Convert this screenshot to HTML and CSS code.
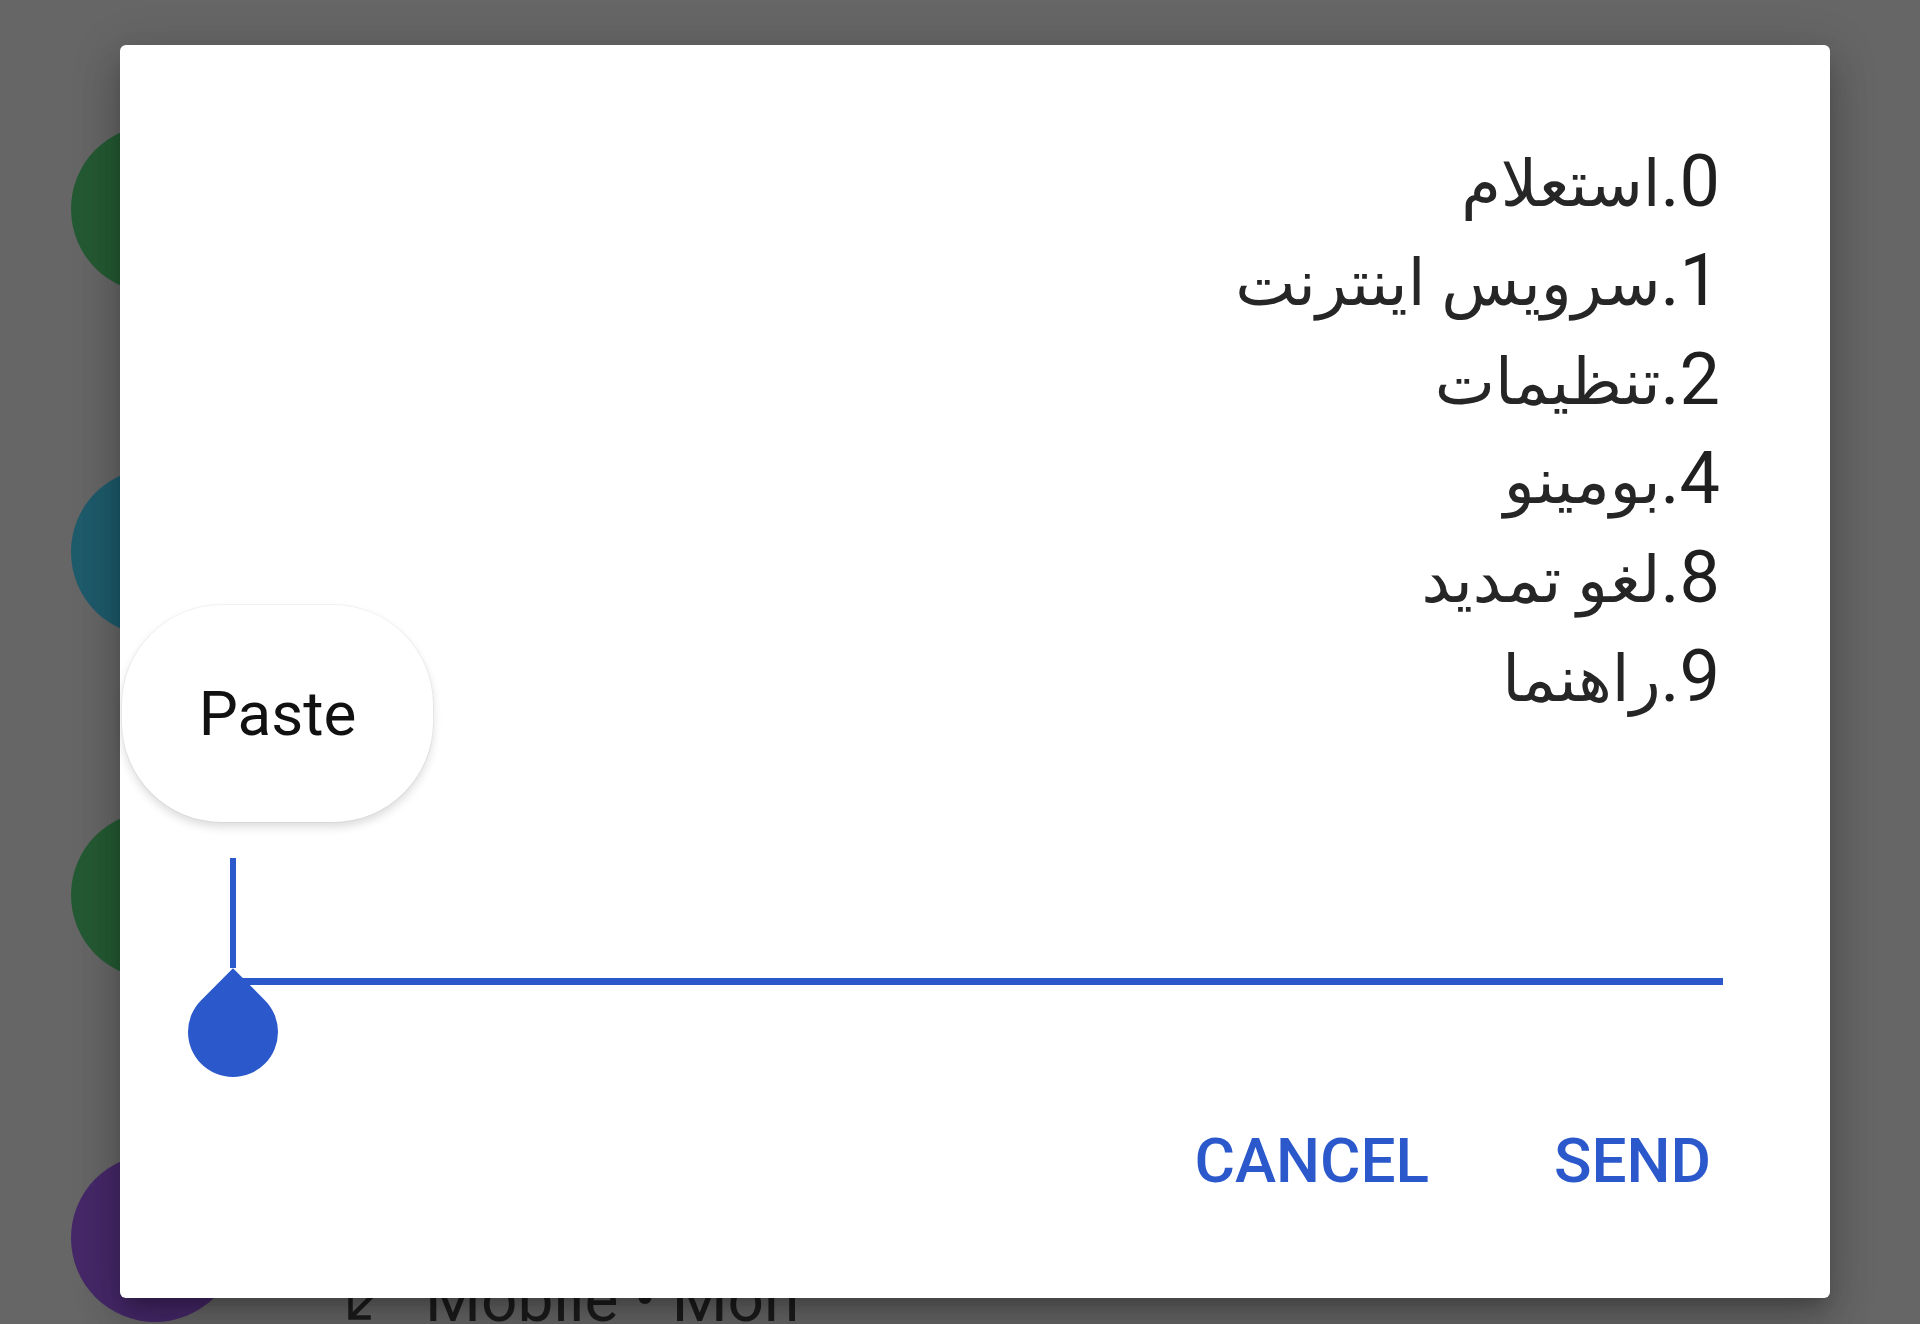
FILE: index.html
```html
<!DOCTYPE html>
<html lang="fa">
<head>
<meta charset="utf-8">
<title>USSD</title>
<link rel="stylesheet" href="styles.css">
</head>
<body>
<div class="screen">
  <ul class="calls">
    <li class="call"><span class="avatar avatar-green"></span><div class="call-text"></div></li>
    <li class="call"><span class="avatar avatar-teal"></span><div class="call-text"></div></li>
    <li class="call"><span class="avatar avatar-green"></span><div class="call-text"></div></li>
    <li class="call"><span class="avatar avatar-purple"></span>
      <div class="call-text">
        <div class="call-meta" dir="ltr">
          <svg class="call-icon" viewBox="0 0 24 24" aria-hidden="true"><path d="M20 5.41 18.59 4 7 15.59V9H5v10h10v-2H8.41z"/></svg>
          <span>Mobile • Mon</span>
        </div>
      </div>
    </li>
  </ul>

  <div class="dialog">
    <ul class="menu" dir="rtl">
      <li>0.<span class="fa">استعلام</span></li>
      <li>1.<span class="fa">سرویس اینترنت</span></li>
      <li>2.<span class="fa">تنظیمات</span></li>
      <li>4.<span class="fa">بومینو</span></li>
      <li>8.<span class="fa">لغو تمدید</span></li>
      <li>9.<span class="fa">راهنما</span></li>
    </ul>

    <div class="field">
      <span class="cursor"></span>
      <span class="handle"></span>
    </div>

    <div class="actions">
      <button class="btn" type="button">CANCEL</button>
      <button class="btn" type="button">SEND</button>
    </div>

    <div class="paste-pop">Paste</div>
  </div>
</div>
</body>
</html>
```

FILE: styles.css
```css
html, body {
  margin: 0;
  padding: 0;
}

body {
  width: 1920px;
  height: 1324px;
  overflow: hidden;
  background: #666666;
  font-family: Roboto, "DejaVu Sans", sans-serif;
}

.screen {
  position: relative;
  width: 1920px;
  height: 1324px;
  overflow: hidden;
}

/* background call log (dimmed by the scrim) */
.calls {
  list-style: none;
  margin: 0;
  padding: 38px 0 0 71px;
  display: flex;
  flex-direction: column;
}

.call {
  height: 343px;
  display: flex;
  align-items: flex-start;
  flex: none;
}

.avatar {
  width: 168px;
  height: 168px;
  border-radius: 50%;
  margin-top: 87px;
  flex: none;
}

.avatar-green { background: #245a33; }
.avatar-teal { background: #1e5b6b; }
.avatar-purple { background: #462869; }

.call-text {
  padding: 195px 0 0 98px;
}

.call-meta {
  display: flex;
  align-items: center;
  gap: 34px;
  font-size: 64px;
  line-height: 76px;
  color: #1c1c1c;
  white-space: nowrap;
}

.call-icon {
  width: 54px;
  height: 54px;
  fill: #1c1c1c;
  margin-top: 8px;
}

/* dialog */
.dialog {
  position: absolute;
  left: 120px;
  top: 45px;
  width: 1710px;
  height: 1253px;
  background: #ffffff;
  border-radius: 6px;
  box-shadow: 0 11px 15px -7px rgba(0,0,0,.2), 0 24px 38px 3px rgba(0,0,0,.14), 0 9px 46px 8px rgba(0,0,0,.12);
  display: flex;
  flex-direction: column;
}

.menu {
  list-style: none;
  margin: 87px 0 0 0;
  padding: 0 110px 0 0;
  font-size: 72px;
  line-height: 99px;
  color: #1f1f1f;
}

.menu li {
  height: 99px;
}

.menu .fa {
  font-size: 64px;
  line-height: 1;
  color: #262626;
}

.field {
  position: relative;
  margin: 132px 107px 0 113px;
  height: 120px;
  border-bottom: 7px solid #2b58cb;
}

.cursor {
  position: absolute;
  left: -3px;
  top: 0;
  width: 6px;
  height: 110px;
  background: #2b58cb;
}

.handle {
  position: absolute;
  left: -45px;
  top: 129px;
  width: 90px;
  height: 90px;
  background: #2b58cb;
  border-radius: 0 50% 50% 50%;
  transform: rotate(45deg);
}

.actions {
  margin-top: 145px;
  padding-right: 119px;
  display: flex;
  justify-content: flex-end;
  gap: 125px;
}

.btn {
  border: 0;
  background: none;
  padding: 0;
  margin: 0;
  font-family: Roboto, sans-serif;
  font-weight: 500;
  font-size: 62px;
  line-height: 62px;
  color: #2b58cb;
}

.paste-pop {
  position: absolute;
  left: 2px;
  top: 560px;
  width: 311px;
  height: 217px;
  border-radius: 100px;
  background: #ffffff;
  box-shadow: 0 0 0 1px rgba(0,0,0,.04), 0 5px 10px rgba(0,0,0,.14);
  display: flex;
  align-items: center;
  justify-content: center;
  font-size: 62px;
  color: #111111;
}
```
